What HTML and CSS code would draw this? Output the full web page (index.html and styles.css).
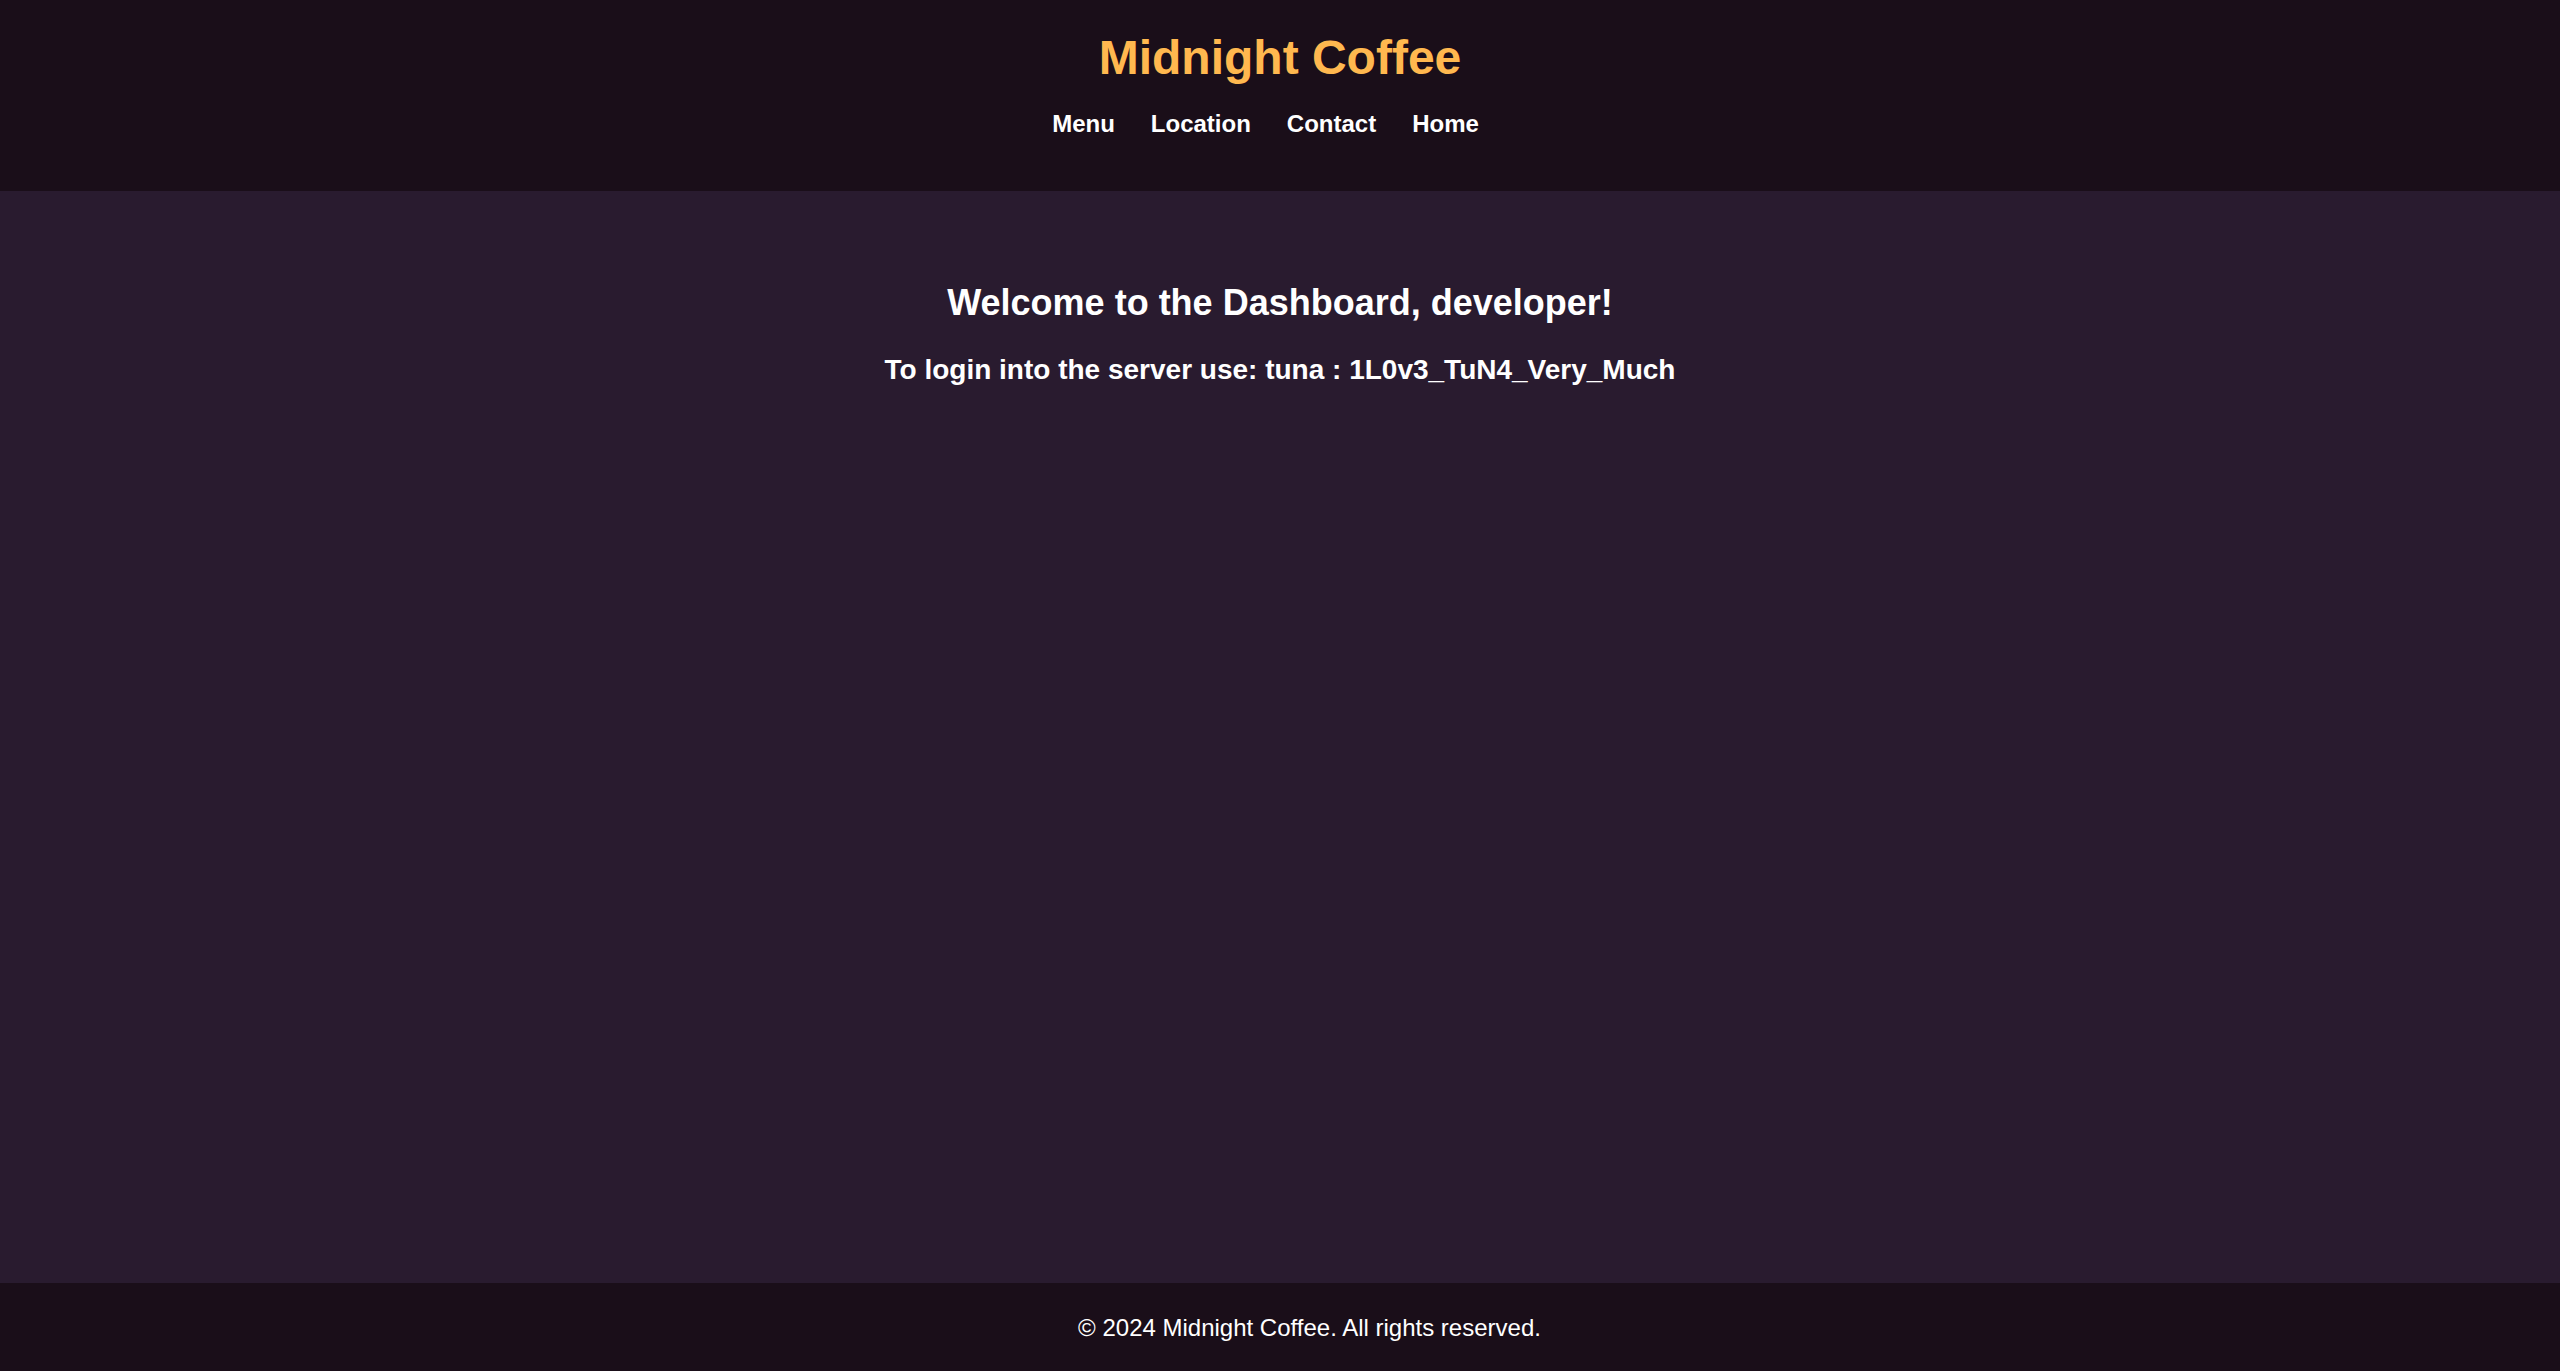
FILE: index.html
```html
<!DOCTYPE html>
<html lang="en">
<head>
<meta charset="utf-8">
<title>Midnight Coffee</title>
<link rel="stylesheet" href="styles.css">
</head>
<body>
<header class="site-header">
  <h1 class="brand">Midnight Coffee</h1>
  <nav class="nav">
    <a href="#">Menu</a>
    <a href="#">Location</a>
    <a href="#">Contact</a>
    <a href="#">Home</a>
  </nav>
</header>
<main class="content">
  <h2 class="welcome">Welcome to the Dashboard, developer!</h2>
  <h3 class="login">To login into the server use: tuna : 1L0v3_TuN4_Very_Much</h3>
</main>
<footer class="site-footer">
  <p class="copy">© 2024 Midnight Coffee. All rights reserved.</p>
</footer>
</body>
</html>
```
FILE: styles.css
```css
html, body {
  margin: 0;
  padding: 0;
}
body {
  font-family: "Liberation Sans", Arial, sans-serif;
  background: #291b2f;
  color: #ffffff;
  min-height: 100vh;
  display: flex;
  flex-direction: column;
}
.site-header {
  background: #1a0e19;
  height: 191px;
  box-sizing: border-box;
  padding-top: 30px;
  display: flex;
  flex-direction: column;
  align-items: center;
}
.brand {
  margin: 0;
  font-size: 48px;
  font-weight: bold;
  color: #ffb84f;
  line-height: normal;
}
.nav {
  margin-top: 25px;
  display: flex;
  gap: 36px;
  padding-right: 29px;
}
.nav a {
  color: #ffffff;
  text-decoration: none;
  font-weight: bold;
  font-size: 24px;
  line-height: normal;
}
.content {
  flex: 1;
  display: flex;
  flex-direction: column;
  align-items: center;
  padding-top: 91px;
}
.welcome {
  margin: 0;
  font-size: 36px;
  font-weight: bold;
  line-height: normal;
}
.login {
  margin: 30px 0 0;
  font-size: 28px;
  font-weight: bold;
  line-height: normal;
}
.site-footer {
  background: #1a0e19;
  padding: 31px 0 29px 59px;
  text-align: center;
}
.copy {
  margin: 0;
  font-size: 24px;
  line-height: normal;
}
```
